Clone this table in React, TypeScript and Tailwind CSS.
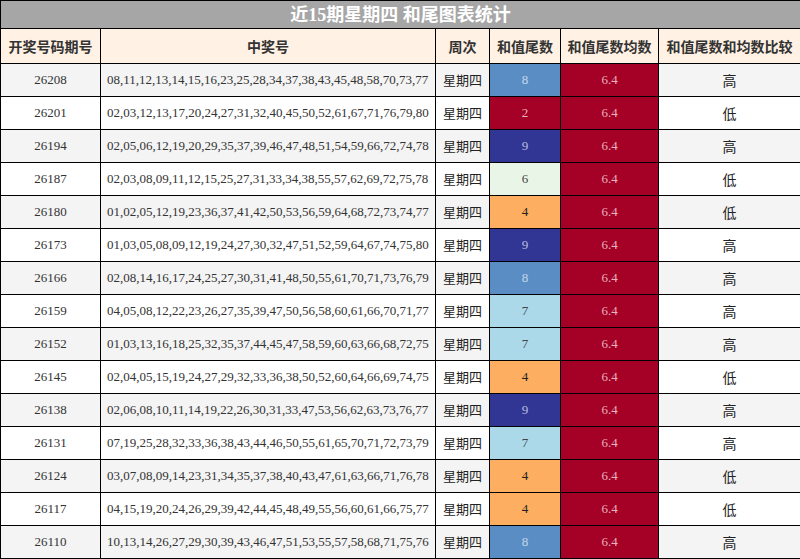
const rows: [string, string, number, string][] = [
  ["26208", "08,11,12,13,14,15,16,23,25,28,34,37,38,43,45,48,58,70,73,77", 8, "高"],
  ["26201", "02,03,12,13,17,20,24,27,31,32,40,45,50,52,61,67,71,76,79,80", 2, "低"],
  ["26194", "02,05,06,12,19,20,29,35,37,39,46,47,48,51,54,59,66,72,74,78", 9, "高"],
  ["26187", "02,03,08,09,11,12,15,25,27,31,33,34,38,55,57,62,69,72,75,78", 6, "低"],
  ["26180", "01,02,05,12,19,23,36,37,41,42,50,53,56,59,64,68,72,73,74,77", 4, "低"],
  ["26173", "01,03,05,08,09,12,19,24,27,30,32,47,51,52,59,64,67,74,75,80", 9, "高"],
  ["26166", "02,08,14,16,17,24,25,27,30,31,41,48,50,55,61,70,71,73,76,79", 8, "高"],
  ["26159", "04,05,08,12,22,23,26,27,35,39,47,50,56,58,60,61,66,70,71,77", 7, "高"],
  ["26152", "01,03,13,16,18,25,32,35,37,44,45,47,58,59,60,63,66,68,72,75", 7, "高"],
  ["26145", "02,04,05,15,19,24,27,29,32,33,36,38,50,52,60,64,66,69,74,75", 4, "低"],
  ["26138", "02,06,08,10,11,14,19,22,26,30,31,33,47,53,56,62,63,73,76,77", 9, "高"],
  ["26131", "07,19,25,28,32,33,36,38,43,44,46,50,55,61,65,70,71,72,73,79", 7, "高"],
  ["26124", "03,07,08,09,14,23,31,34,35,37,38,40,43,47,61,63,66,71,76,78", 4, "低"],
  ["26117", "04,15,19,20,24,26,29,39,42,44,45,48,49,55,56,60,61,66,75,77", 4, "低"],
  ["26110", "10,13,14,26,27,29,30,39,43,46,47,51,53,55,57,58,68,71,75,76", 8, "高"],
];

// colour per tail value (RdYlBu-ish scale)
const tailStyle: Record<number, string> = {
  2: "bg-[#a50026] text-[#e6b3bf]",
  4: "bg-[#fdae61] text-[#222]",
  6: "bg-[#e9f5e7] text-[#444]",
  7: "bg-[#abd9e9] text-[#444]",
  8: "bg-[#5a8dc3] text-[#c6d8ec]",
  9: "bg-[#313695] text-[#b8bbdc]",
};

const font = "font-['Liberation_Serif','Noto_Sans_CJK_SC',serif]";
const cjk = "font-['Noto_Sans_CJK_SC',sans-serif]";

export default function App() {
  return (
    <div className="w-[800px] h-[559px] bg-white">
      <table className={`w-[800px] table-fixed border-collapse ${font}`}>
        <colgroup>
          <col className="w-[100px]" />
          <col className="w-[335px]" />
          <col className="w-[54px]" />
          <col className="w-[71px]" />
          <col className="w-[98px]" />
          <col className="w-[142px]" />
        </colgroup>
        <thead>
          <tr>
            <th
              colSpan={6}
              className="h-[28px] p-0 border border-black bg-[#a6a6a6] text-white text-[18px] font-bold leading-none text-center"
            >
              近15期星期四 和尾图表统计
            </th>
          </tr>
          <tr className={`bg-[#fff1e3] text-[#333] text-[14px] font-bold ${cjk}`}>
            <th className="h-[35px] p-0 border border-black">开奖号码期号</th>
            <th className="p-0 border border-black">中奖号</th>
            <th className="p-0 border border-black">周次</th>
            <th className="p-0 border border-black">和值尾数</th>
            <th className="p-0 border border-black">和值尾数均数</th>
            <th className="p-0 border border-black">和值尾数和均数比较</th>
          </tr>
        </thead>
        <tbody>
          {rows.map(([issue, nums, tail, cmp], i) => (
            <tr key={issue} className={i % 2 === 0 ? "bg-[#f4f4f4]" : "bg-white"}>
              <td className="h-[33px] p-0 border border-black text-center text-[13px] text-[#333]">
                {issue}
              </td>
              <td className="p-0 pl-[6px] border border-black text-[13px] text-[#333] whitespace-nowrap">
                {nums}
              </td>
              <td className={`p-0 border border-black text-center text-[13px] text-[#222] ${cjk}`}>
                星期四
              </td>
              <td className={`p-0 border border-black text-center text-[13px] ${tailStyle[tail]}`}>
                {tail}
              </td>
              <td className="p-0 border border-black text-center text-[13px] bg-[#a50026] text-[#e6b3bf]">
                6.4
              </td>
              <td className={`p-0 border border-black text-center text-[14px] text-[#222] ${cjk}`}>
                {cmp}
              </td>
            </tr>
          ))}
        </tbody>
      </table>
    </div>
  );
}
